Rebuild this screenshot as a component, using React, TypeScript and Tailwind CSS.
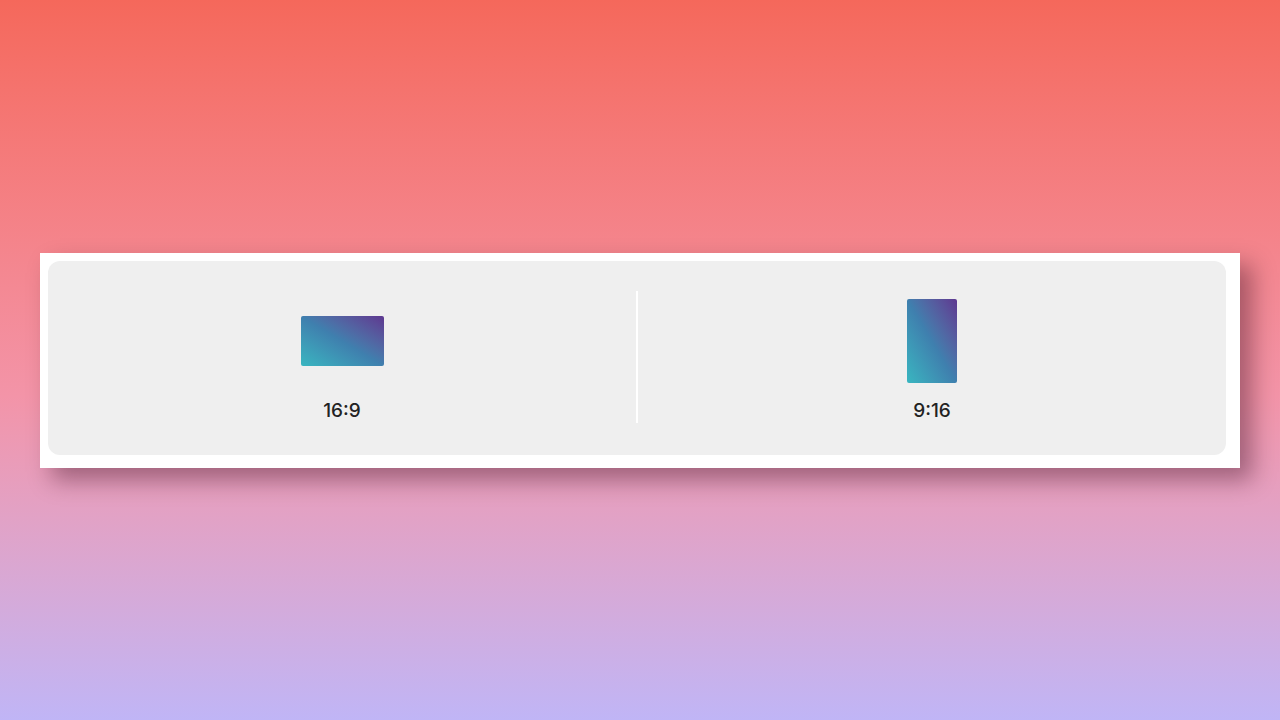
import React from 'react';

type Ratio = {
  label: string;
  // box size in px, written out so Tailwind sees the classes
  boxClass: string;
};

const RATIOS: Ratio[] = [
  { label: '16:9', boxClass: 'w-[83px] h-[50px]' },
  { label: '9:16', boxClass: 'w-[50px] h-[84px]' },
];

function RatioOption({ ratio }: { ratio: Ratio }) {
  return (
    <div className="flex flex-1 flex-col items-center pt-2">
      <div className="flex h-[84px] items-center justify-center">
        <div
          className={`${ratio.boxClass} rounded-[2px] bg-linear-to-tr from-[#38b6c0] via-[#3f7fae] to-[#5d3790]`}
        />
      </div>
      <span className="mt-4 text-[19px] font-medium leading-6 text-[#222222]">{ratio.label}</span>
    </div>
  );
}

export default function App() {
  return (
    <div
      className="flex h-screen w-full items-center px-10 bg-linear-to-b from-[#f5685b] via-[#f394a8] via-55% to-[#c0b5f6]"
      style={{ fontFamily: 'Inter, "Noto Sans", sans-serif' }}
    >
      <div className="w-full bg-white pl-2 pt-2 pr-[14px] pb-[13px] shadow-[12px_12px_22px_rgba(40,0,20,0.38)]">
        <div className="flex rounded-xl bg-[#efefef] pt-[30px] pb-[32px]">
          <RatioOption ratio={RATIOS[0]} />
          <div className="w-[2px] bg-white" />
          <RatioOption ratio={RATIOS[1]} />
        </div>
      </div>
    </div>
  );
}
